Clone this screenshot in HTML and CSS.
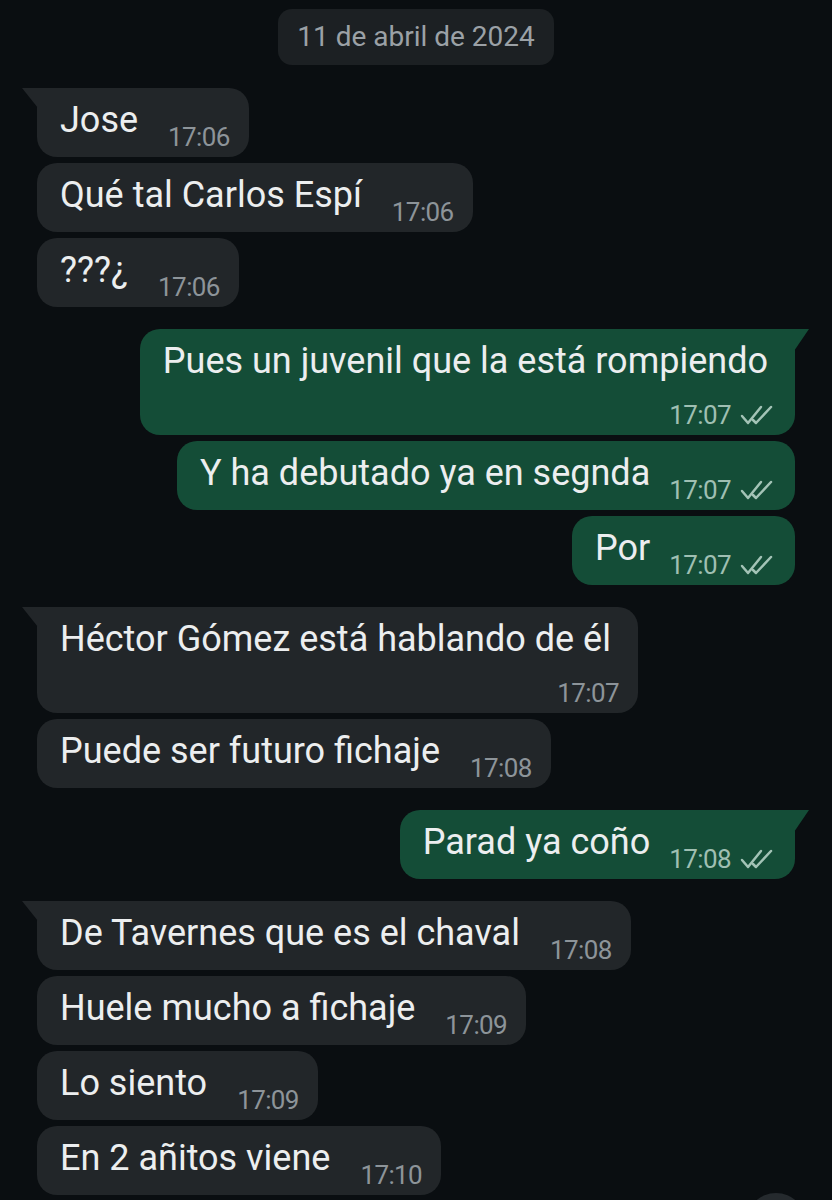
FILE: index.html
```html
<!DOCTYPE html>
<html lang="es">
<head>
    <meta charset="UTF-8">
    <meta name="viewport" content="width=device-width, initial-scale=1.0">
    <title>Chat</title>
    <link rel="stylesheet" href="styles.css">
</head>
<body>

<div class="screen">
    <div class="day">11 de abril de 2024</div>

    <div class="msg in first"><span class="text">Jose</span><span class="meta">17:06</span></div>
    <div class="msg in"><span class="text">Qué tal Carlos Espí</span><span class="meta">17:06</span></div>
    <div class="msg in"><span class="text">???¿</span><span class="meta">17:06</span></div>

    <div class="msg out first stack">
        <span class="text">Pues un juvenil que la está rompiendo</span>
        <span class="meta">17:07
            <svg class="ticks" width="36" height="22" viewBox="0 0 36 22"><polyline points="2,12 8,19 21,3"/><polyline points="13,16 16,19 31,3"/></svg>
        </span>
    </div>
    <div class="msg out">
        <span class="text">Y ha debutado ya en segnda</span>
        <span class="meta">17:07
            <svg class="ticks" width="36" height="22" viewBox="0 0 36 22"><polyline points="2,12 8,19 21,3"/><polyline points="13,16 16,19 31,3"/></svg>
        </span>
    </div>
    <div class="msg out">
        <span class="text">Por</span>
        <span class="meta">17:07
            <svg class="ticks" width="36" height="22" viewBox="0 0 36 22"><polyline points="2,12 8,19 21,3"/><polyline points="13,16 16,19 31,3"/></svg>
        </span>
    </div>

    <div class="msg in first stack"><span class="text">Héctor Gómez está hablando de él</span><span class="meta">17:07</span></div>
    <div class="msg in"><span class="text">Puede ser futuro fichaje</span><span class="meta">17:08</span></div>

    <div class="msg out first">
        <span class="text">Parad ya coño</span>
        <span class="meta">17:08
            <svg class="ticks" width="36" height="22" viewBox="0 0 36 22"><polyline points="2,12 8,19 21,3"/><polyline points="13,16 16,19 31,3"/></svg>
        </span>
    </div>

    <div class="msg in first"><span class="text">De Tavernes que es el chaval</span><span class="meta">17:08</span></div>
    <div class="msg in"><span class="text">Huele mucho a fichaje</span><span class="meta">17:09</span></div>
    <div class="msg in"><span class="text">Lo siento</span><span class="meta">17:09</span></div>
    <div class="msg in"><span class="text">En 2 añitos viene</span><span class="meta">17:10</span></div>

    <div class="scroll-btn"></div>
</div>

</body>
</html>
```

FILE: styles.css
```css
/* Page */
* {
    box-sizing: border-box;
}

body {
    margin: 0;
    background: #0a0e11;
    font-family: Roboto, "Noto Sans", sans-serif;
}

.screen {
    position: relative;
    height: 1200px;
    overflow: hidden;
    display: flex;
    flex-direction: column;
    padding: 9px 37px 0;
}

/* Date pill */
.day {
    align-self: center;
    background: #1c2023;
    color: #9ba1a6;
    font-size: 28px;
    line-height: 56px;
    padding: 0 19px;
    border-radius: 14px;
    margin-bottom: 23px;
}

/* Bubbles */
.msg {
    position: relative;
    display: flex;
    align-items: flex-start;
    padding: 10px 19px 5px 23px;
    border-radius: 20px;
    color: #eceeef;
    margin-top: 6px;
}

.msg.in {
    align-self: flex-start;
    background: #222629;
}

.msg.out {
    align-self: flex-end;
    background: #144d37;
}

.msg.first {
    margin-top: 22px;
}

.day + .msg {
    margin-top: 0;
}

.text {
    font-size: 36px;
    line-height: 44px;
    white-space: nowrap;
}

.meta {
    display: flex;
    align-items: center;
    margin-top: 24px;
    margin-left: 30px;
    font-size: 26px;
    line-height: 30px;
    letter-spacing: -0.6px;
    color: #8d9499;
    white-space: nowrap;
}

.out .meta {
    margin-left: 19px;
    color: #9fbfb2;
}

.ticks {
    margin-left: 9px;
    fill: none;
    stroke: #a3c3b6;
    stroke-width: 2.5;
    stroke-linecap: round;
    stroke-linejoin: round;
}

/* time on its own line */
.msg.stack {
    flex-direction: column;
    padding-right: 27px;
}

.msg.stack .meta {
    align-self: flex-end;
    margin-top: 17px;
    margin-right: -8px;
}

/* Tails */
.msg.in.first {
    border-top-left-radius: 0;
}

.msg.in.first::before {
    content: "";
    position: absolute;
    left: -15px;
    top: 0;
    width: 16px;
    height: 20px;
    background: #222629;
    clip-path: polygon(0 0, 100% 0, 100% 100%);
}

.msg.out.first {
    border-top-right-radius: 0;
}

.msg.out.first::before {
    content: "";
    position: absolute;
    right: -14px;
    top: 0;
    width: 15px;
    height: 22px;
    background: #144d37;
    clip-path: polygon(0 0, 100% 0, 0 100%);
}

/* Scroll-down button peeking at the bottom */
.scroll-btn {
    position: absolute;
    left: 746px;
    top: 1193px;
    width: 60px;
    height: 60px;
    border-radius: 50%;
    background: #252a2e;
}
```
